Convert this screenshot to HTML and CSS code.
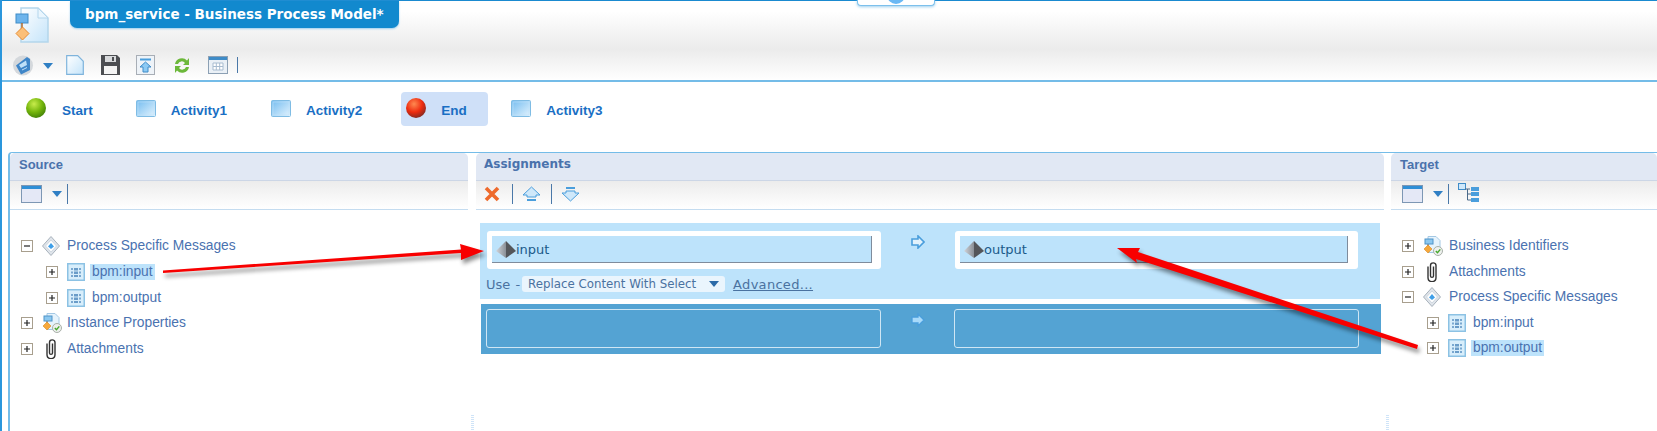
FILE: index.html
```html
<!DOCTYPE html>
<html lang="en">
<head>
    <meta charset="UTF-8">
    <meta name="viewport" content="width=device-width, initial-scale=1.0">
    <title>bpm_service - Business Process Model</title>
    <link rel="stylesheet" href="styles.css">
</head>
<body>
    <svg class="defs" width="0" height="0">
        <defs>
            <radialGradient id="gGreen" cx="40%" cy="30%" r="75%"><stop offset="0" stop-color="#c8ec4c"/><stop offset=".55" stop-color="#74b50c"/><stop offset="1" stop-color="#3f7d08"/></radialGradient>
            <radialGradient id="gRed" cx="40%" cy="30%" r="75%"><stop offset="0" stop-color="#ff8a50"/><stop offset=".55" stop-color="#ee2c10"/><stop offset="1" stop-color="#7a2a24"/></radialGradient>
            <linearGradient id="gActivity" x1="0" y1="0" x2="1" y2="1"><stop offset="0" stop-color="#74bcf0"/><stop offset="1" stop-color="#e4f4fe"/></linearGradient>
            <linearGradient id="gPage" x1="0" y1="0" x2="1" y2="1"><stop offset="0" stop-color="#fff"/><stop offset="1" stop-color="#c4e4fa"/></linearGradient>
            <linearGradient id="gLeft" x1="0" y1="0" x2="1" y2="0"><stop offset="0" stop-color="#d0d4da"/><stop offset="1" stop-color="#8a8f96"/></linearGradient>
            <symbol id="i-ball-green" viewBox="0 0 20 20"><circle cx="10" cy="10" r="10" fill="url(#gGreen)"/></symbol>
            <symbol id="i-ball-red" viewBox="0 0 20 20"><circle cx="10" cy="10" r="10" fill="url(#gRed)"/></symbol>
            <symbol id="i-activity" viewBox="0 0 20 17"><rect x=".5" y=".5" width="19" height="16" rx="1" fill="url(#gActivity)" stroke="#7fbce4"/><rect x="2" y="2" width="16" height="13" fill="none" stroke="#bfe2f8" stroke-width=".6"/></symbol>
            <symbol id="i-window" viewBox="0 0 21 18"><rect x=".5" y=".5" width="20" height="17" fill="#e4e8f6" stroke="#7d97b4"/><rect x="1" y="1" width="19" height="3" fill="#2f8fd6"/></symbol>
            <symbol id="i-drop" viewBox="0 0 10 6"><path d="M0 0h10L5 6z" fill="#2f7fc4"/></symbol>
            <symbol id="i-plus" viewBox="0 0 12 12"><rect x=".5" y=".5" width="11" height="11" fill="#fff" stroke="#a89f8e"/><path d="M3 6h6M6 3v6" stroke="#222" stroke-width="1.2"/></symbol>
            <symbol id="i-minus" viewBox="0 0 12 12"><rect x=".5" y=".5" width="11" height="11" fill="#fff" stroke="#a89f8e"/><path d="M3 6h6" stroke="#222" stroke-width="1.2"/></symbol>
            <symbol id="i-diamond" viewBox="0 0 18 20"><path d="M9 .5 17.5 10 9 19.500.5 10z" fill="#dfe4ea" stroke="#a8b2bc"/><path d="M9 4 14.500 10 9 16 3.500 10z" fill="#fff" stroke="#cfd8e0"/><path d="M9 7 12 10.500 9 13 6 10.500z" fill="#3f9fe8"/></symbol>
            <symbol id="i-message" viewBox="0 0 18 18"><rect x=".75" y=".75" width="16.500" height="16.500" fill="#d8eefb" stroke="#8cc2e4" stroke-width="1.500"/><path d="M4 5h2v2H4zM4 8.500h2v2H4zM4 12h2v2H4zM12 5h2v2h-2zM12 8.500h2v2h-2zM12 12h2v2h-2z" fill="#7aa8d0"/><path d="M7 5h4v2.500H7zM7 8.500h4V11H7zM7 12h4v2H7z" fill="#6a9cc8"/></symbol>
            <symbol id="i-props" viewBox="0 0 20 20"><path d="M5 .5h8l4 4v12H5z" fill="#e6f3fc" stroke="#a4c8e4"/><rect x="2" y="3" width="8" height="5" fill="#8cc8f0" stroke="#4f94c8"/><path d="M5 8v3" stroke="#777"/><path d="M5 9 9 13 5 17 1 13z" fill="#f6a83c" stroke="#d88a20" stroke-width=".6"/><circle cx="15" cy="15" r="4.500" fill="#eef0ee" stroke="#a8b0a8"/><path d="M12.800 15l1.700 1.800 2.800-3.400" fill="none" stroke="#46a82c" stroke-width="1.400"/></symbol>
            <symbol id="i-clip" viewBox="0 0 12 20"><path d="M2 4.500v11c0 5.500 8 5.500 8 0V3.500C10 0 4.500 0 4.500 3.500V14c0 1.800 3 1.800 3 0V4.500" fill="none" stroke="#333" stroke-width="1.400"/></symbol>
            <symbol id="i-pyramid" viewBox="0 0 20 17"><path d="M10 0 0 10l10 7z" fill="url(#gLeft)"/><path d="M10 0l10 10-10 7z" fill="#54565a"/></symbol>
            <symbol id="i-next" viewBox="0 0 14 14"><path d="M1 4h6V1l6 6-6 6v-3H1z" fill="#e2f2fc" stroke="#4a9edc" stroke-width="1.600"/></symbol>
            <symbol id="i-next-dark" viewBox="0 0 14 14"><path d="M1 4h6V1l6 6-6 6v-3H1z" fill="#a8dafa" stroke="#4a9edc" stroke-width="1.300"/></symbol>
        </defs>
    </svg>

    <div class="app">
        <div class="header">
            <div class="title-row">
                <svg class="model-icon" width="36" height="37" viewBox="0 0 36 37">
                    <path d="M6 1h17l10 10v24H6z" fill="url(#gPage)" stroke="#b4d6ec" stroke-width="1.500"/>
                    <path d="M23 1v10h10z" fill="#eaf6fe" stroke="#b4d6ec"/>
                    <rect x="1" y="7" width="12" height="9" fill="#6cb4ec" stroke="#3f8cc8"/>
                    <path d="M7 16v6" stroke="#b06a2c" stroke-width="1.500"/>
                    <path d="M7.500 20 14 26.500 7.500 33 1 26.500z" fill="#fbbf78" stroke="#e88c30"/>
                </svg>
                <div class="title-tab">bpm_service - Business Process Model*</div>
            </div>
            <div class="tool-row">
                <svg class="ti-globe" width="20" height="21" viewBox="0 0 20 21">
                    <circle cx="10" cy="10.500" r="10" fill="#d4d8dc"/>
                    <path d="M3 10.500 14 2l3 2v11l-9 4.500z" fill="#3f86c8"/>
                    <path d="M6 10l7-4.500 1 4.500-6 3z" fill="#bfe0f8"/>
                    <path d="M9 15l5-2.500" stroke="#bfe0f8"/>
                </svg>
                <svg class="ti-drop" width="10" height="6"><use href="#i-drop"/></svg>
                <svg class="ti-new" width="18" height="20" viewBox="0 0 18 20">
                    <path d="M.7.700h11l5.600 5.600v13H.7z" fill="url(#gPage)" stroke="#7fb4dc" stroke-width="1.200"/>
                </svg>
                <svg class="ti-save" width="19" height="20" viewBox="0 0 19 20">
                    <path d="M0 0h16l3 3v17H0z" fill="#4c4e52"/>
                    <rect x="4" y="1" width="11" height="6" fill="#d8dadc"/>
                    <rect x="11" y="2" width="2" height="4" fill="#4c4e52"/>
                    <rect x="3" y="11" width="13" height="8" fill="#f4f4f4"/>
                </svg>
                <svg class="ti-up" width="19" height="20" viewBox="0 0 19 20">
                    <rect x=".5" y=".5" width="18" height="19" fill="#eef3f8" stroke="#a8aeb6"/>
                    <path d="M4 4.500h11" stroke="#4a9edc" stroke-width="2"/>
                    <path d="M9.500 7 15 12h-3v5H7v-5H4z" fill="#8ccaf4" stroke="#3f8cc8"/>
                </svg>
                <svg class="ti-refresh" width="18" height="19" viewBox="0 0 18 19">
                    <path d="M2 8a7 7 0 0 1 12-3.500L16 2v7h-6l2-2a4 4 0 0 0-7 1z" fill="#6cb83a"/>
                    <path d="M16 11a7 7 0 0 1-12 3.500L2 17v-7h6l-2 2a4 4 0 0 0 7-1z" fill="#6cb83a"/>
                </svg>
                <svg class="ti-cal" width="20" height="18" viewBox="0 0 20 18">
                    <rect x=".5" y=".5" width="19" height="17" fill="#eaf0f6" stroke="#8ca0b4"/>
                    <rect x="1" y="1" width="18" height="3" fill="#3f8cc8"/>
                    <path d="M5 7h10v7H5zM8.300 7v7M11.700 7v7M5 10.500h10" fill="#fff" stroke="#a8bcd0"/>
                </svg>
                <span class="tool-sep"></span>
            </div>
            <div class="top-tab"><span class="top-tab-dot"></span></div>
        </div>

        <div class="nav">
            <div class="nav-item nav-first"><svg width="20" height="20"><use href="#i-ball-green"/></svg><span>Start</span></div>
            <div class="nav-item"><svg width="20" height="17"><use href="#i-activity"/></svg><span>Activity1</span></div>
            <div class="nav-item"><svg width="20" height="17"><use href="#i-activity"/></svg><span>Activity2</span></div>
            <div class="nav-item nav-selected"><svg width="20" height="20"><use href="#i-ball-red"/></svg><span>End</span></div>
            <div class="nav-item nav-last"><svg width="20" height="17"><use href="#i-activity"/></svg><span>Activity3</span></div>
        </div>

        <div class="panels">
            <section class="panel">
                <h2 class="panel-head">Source</h2>
                <div class="panel-tools">
                    <svg class="pt-window" width="21" height="18"><use href="#i-window"/></svg>
                    <svg class="pt-drop" width="10" height="6"><use href="#i-drop"/></svg>
                    <span class="pt-sep"></span>
                </div>
                <div class="tree">
                    <div class="tree-row"><svg width="12" height="12"><use href="#i-minus"/></svg><svg class="tree-icon" width="18" height="20"><use href="#i-diamond"/></svg><span class="tree-label">Process Specific Messages</span></div>
                    <div class="tree-row tree-child"><svg width="12" height="12"><use href="#i-plus"/></svg><svg class="tree-icon" width="18" height="18"><use href="#i-message"/></svg><span class="tree-label tree-selected">bpm:input</span></div>
                    <div class="tree-row tree-child"><svg width="12" height="12"><use href="#i-plus"/></svg><svg class="tree-icon" width="18" height="18"><use href="#i-message"/></svg><span class="tree-label">bpm:output</span></div>
                    <div class="tree-row"><svg width="12" height="12"><use href="#i-plus"/></svg><svg class="tree-icon" width="20" height="20"><use href="#i-props"/></svg><span class="tree-label">Instance Properties</span></div>
                    <div class="tree-row"><svg width="12" height="12"><use href="#i-plus"/></svg><svg class="tree-icon tree-clip" width="12" height="20"><use href="#i-clip"/></svg><span class="tree-label">Attachments</span></div>
                </div>
            </section>

            <div class="splitter"><span></span></div>

            <section class="panel">
                <h2 class="panel-head panel-head-wide">Assignments</h2>
                <div class="panel-tools tools-assign">
                    <svg width="16" height="16" viewBox="0 0 16 16"><path d="M2 2l12 12M14 2 2 14" stroke="#ee6a2c" stroke-width="3.600"/></svg>
                    <span class="pt-sep"></span>
                    <svg width="19" height="16" viewBox="0 0 19 16"><path d="M9.500 1 18 9h-4v2H5V9H1z" fill="#cfe8fa" stroke="#4a9edc"/><path d="M5 14h9" stroke="#4a9edc" stroke-width="2"/></svg>
                    <span class="pt-sep"></span>
                    <svg width="19" height="16" viewBox="0 0 19 16"><path d="M9.500 15 18 7h-4V5H5v2H1z" fill="#cfe8fa" stroke="#4a9edc"/><path d="M5 2h9" stroke="#4a9edc" stroke-width="2"/></svg>
                </div>
                <div class="assign-list">
                    <div class="assign-row">
                        <div class="assign-grid">
                            <div class="copy-box"><div class="copy-field"><svg width="20" height="17"><use href="#i-pyramid"/></svg><span>input</span></div></div>
                            <svg class="assign-arrow" width="14" height="14"><use href="#i-next"/></svg>
                            <div class="copy-box copy-box-to"><div class="copy-field"><svg width="20" height="17"><use href="#i-pyramid"/></svg><span>output</span></div></div>
                        </div>
                        <div class="use-row">
                            <span class="use-label">Use -</span>
                            <span class="use-select">Replace Content With Select<svg width="12" height="6" viewBox="0 0 10 6"><path d="M0 0h10L5 6z" fill="#2a6aa8"/></svg></span>
                            <a class="use-link" href="#">Advanced...</a>
                        </div>
                    </div>
                    <div class="assign-row assign-empty">
                        <div class="assign-grid assign-grid-empty">
                            <div class="empty-box"></div>
                            <svg class="assign-arrow" width="14" height="14"><use href="#i-next-dark"/></svg>
                            <div class="empty-box"></div>
                        </div>
                    </div>
                </div>
            </section>

            <div class="splitter"><span></span></div>

            <section class="panel">
                <h2 class="panel-head">Target</h2>
                <div class="panel-tools">
                    <svg class="pt-window" width="21" height="18"><use href="#i-window"/></svg>
                    <svg class="pt-drop" width="10" height="6"><use href="#i-drop"/></svg>
                    <span class="pt-sep"></span>
                    <svg class="pt-tree" width="21" height="20" viewBox="0 0 21 20">
                        <rect x=".5" y=".5" width="7" height="6" fill="#cfe8fa" stroke="#3f8cc8"/>
                        <path d="M7 6h5M9.500 6v11M9.500 11H13M9.500 17H13" stroke="#4a6a8a" fill="none"/>
                        <path d="M13 4h8v4h-8zM13 9h8v4h-8zM13 15h8v4h-8z" fill="#4a9edc"/>
                    </svg>
                </div>
                <div class="tree tree-target">
                    <div class="tree-row"><svg width="12" height="12"><use href="#i-plus"/></svg><svg class="tree-icon" width="20" height="20"><use href="#i-props"/></svg><span class="tree-label">Business Identifiers</span></div>
                    <div class="tree-row"><svg width="12" height="12"><use href="#i-plus"/></svg><svg class="tree-icon tree-clip" width="12" height="20"><use href="#i-clip"/></svg><span class="tree-label">Attachments</span></div>
                    <div class="tree-row"><svg width="12" height="12"><use href="#i-minus"/></svg><svg class="tree-icon" width="18" height="20"><use href="#i-diamond"/></svg><span class="tree-label">Process Specific Messages</span></div>
                    <div class="tree-row tree-child"><svg width="12" height="12"><use href="#i-plus"/></svg><svg class="tree-icon" width="18" height="18"><use href="#i-message"/></svg><span class="tree-label">bpm:input</span></div>
                    <div class="tree-row tree-child"><svg width="12" height="12"><use href="#i-plus"/></svg><svg class="tree-icon" width="18" height="18"><use href="#i-message"/></svg><span class="tree-label tree-selected">bpm:output</span></div>
                </div>
            </section>
        </div>
    </div>

    <svg class="callouts" width="1657" height="431" viewBox="0 0 1657 431">
        <polygon points="163,270.500 461,249.500 460,244 484,251 461,260 461,253 163,273" fill="#f80000"/>
        <polygon points="1117,248 1140,248 1138,252 1418,345 1417,349 1136,259 1137,263" fill="#f80000"/>
    </svg>
</body>
</html>
```

FILE: styles.css
```css
* {
    box-sizing: border-box;
}
html, body {
    margin: 0;
    height: 431px;
    overflow: hidden;
    background: #fff;
}
body {
    font-family: "Liberation Sans", Arial, sans-serif;
    position: relative;
}
svg {
    display: block;
    flex: none;
}
.defs {
    position: absolute;
}
.app {
    height: 431px;
    border-left: 2px solid #2a96dc;
    display: flex;
    flex-direction: column;
}

/* header */
.header {
    position: relative;
    height: 82px;
    border-top: 1px solid #1a8ad0;
    border-bottom: 2px solid #74bce8;
    background: linear-gradient(#fff 0, #fff 10px, #ebebeb 48px, #fff 79px);
}
.title-row {
    display: flex;
    height: 50px;
}
.model-icon {
    margin: 6px 0 0 13px;
}
.title-tab {
    margin-left: 19px;
    width: 329px;
    height: 27px;
    padding-left: 15px;
    background: #1289ce;
    color: #fff;
    font: bold 13.5px/26px "DejaVu Sans", sans-serif;
    border-radius: 0 0 7px 7px;
    box-shadow: 0 1px 2px #9ccfee;
}
.tool-row {
    display: flex;
    align-items: center;
    height: 28px;
}
.ti-globe { margin-left: 11px; }
.ti-drop { margin-left: 10px; margin-top: 2px; }
.ti-new { margin-left: 13px; }
.ti-save { margin-left: 17px; }
.ti-up { margin-left: 16px; }
.ti-refresh { margin-left: 18px; }
.ti-cal { margin-left: 17px; }
.tool-sep {
    width: 1px;
    height: 16px;
    margin-left: 9px;
    background: #4a78a8;
}
.top-tab {
    position: absolute;
    left: 855px;
    top: -1px;
    width: 78px;
    height: 6px;
    background: #fff;
    border: 1px solid #7cc0ec;
    border-top: 0;
    border-radius: 0 0 4px 4px;
    box-shadow: 0 1px 3px #9ccfee;
    overflow: hidden;
}
.top-tab-dot {
    display: block;
    width: 18px;
    height: 18px;
    margin: -14px 0 0 29px;
    border-radius: 50%;
    background: #6ab8f4;
}

/* process steps */
.nav {
    display: flex;
    align-items: flex-start;
    height: 70px;
    padding-top: 10px;
    flex: none;
}
.nav-item {
    display: flex;
    align-items: center;
    height: 34px;
    color: #1a6fc4;
    font-size: 13.5px;
    font-weight: bold;
}
.nav-item svg {
    margin-top: -2px;
}
.nav-item span {
    margin: 2px 0 0 15px;
}
.nav-first { margin-left: 24px; }
.nav-first span { margin-left: 16px; }
.nav-item:nth-child(2) { margin-left: 43px; }
.nav-item:nth-child(3) { margin-left: 44px; }
.nav-selected {
    margin-left: 39px;
    width: 87px;
    padding-left: 5px;
    background: #cfe0f8;
    border-radius: 4px;
}
.nav-last { margin-left: 23px; }

/* panels */
.panels {
    flex: 1;
    margin-left: 6px;
    display: grid;
    grid-template-columns: 458px 8px 908px 7px 1fr;
    border-top: 1px solid #74bce8;
    border-left: 2px solid #74bce8;
    border-top-left-radius: 4px;
    min-height: 0;
}
.panel {
    min-width: 0;
}
.panel-head {
    margin: 0;
    height: 28px;
    padding-left: 9px;
    line-height: 23px;
    font-size: 13px;
    font-weight: bold;
    color: #4a72ac;
    background: #e1e8f4;
    border-bottom: 1px solid #ccd6e6;
    border-radius: 5px 5px 0 0;
}
.panel-head-wide {
    padding-left: 8px;
    font-family: "DejaVu Sans", sans-serif;
    font-size: 12px;
}
.panel-tools {
    display: flex;
    align-items: center;
    height: 29px;
    padding: 0 0 3px 11px;
    background: linear-gradient(#ececec, #fff);
    border-bottom: 1px solid #c4dcf0;
}
.pt-drop { margin: 1px 0 0 10px; }
.pt-sep {
    width: 1px;
    height: 20px;
    margin: 0 0 0 5px;
    background: #4a78a8;
}
.pt-tree { margin-left: 9px; margin-top: -1px; }
.tools-assign {
    padding-left: 8px;
}
.tools-assign .pt-sep { margin: 0 9px 0 12px; }
.tools-assign .pt-sep:nth-child(4) { margin: 0 9px 0 10px; }

/* trees */
.tree {
    padding: 23.5px 0 0 11px;
}
.tree-row {
    position: relative;
    display: flex;
    align-items: center;
    height: 25.7px;
}
.tree-target .tree-row {
    height: 25.5px;
}
.tree-child {
    padding-left: 25px;
}
.tree-icon {
    margin-left: 9px;
}
.tree-clip {
    margin-left: 12px;
}
.tree-label {
    position: absolute;
    left: 44px;
    padding: 0 2px;
    line-height: 16px;
    font-size: 13.8px;
    color: #4a72b0;
    white-space: nowrap;
}
.tree-target .tree-label {
    left: 45px;
}
.tree-child .tree-label,
.tree-target .tree-child .tree-label {
    left: 69px;
}
.tree-selected {
    background: #bde3fb;
}

/* assignments */
.assign-list {
    padding: 13px 0 0 4px;
}
.assign-row {
    width: 900px;
    height: 76px;
    padding: 8px 0 0 7px;
    background: #bde3fb;
    font: 12px "DejaVu Sans", sans-serif;
    color: #4a72a0;
}
.assign-grid {
    display: grid;
    grid-template-columns: 394px 74px 403px;
}
.copy-box {
    height: 38px;
    padding: 5px 9px 6px 5px;
    background: #fff;
    border-radius: 3px;
}
.copy-box-to {
    padding-right: 10px;
}
.copy-field {
    display: flex;
    align-items: center;
    height: 27px;
    padding-left: 4px;
    background: #bde3fb;
    border-right: 1px solid #7f8c9c;
    border-bottom: 1px solid #7f8c9c;
    font-size: 13px;
    color: #1a5a8a;
}
.assign-arrow {
    justify-self: center;
    margin-top: 4px;
}
.use-row {
    display: flex;
    align-items: center;
    height: 16px;
    margin: 7px 0 0 -1px;
}
.use-label {
    font-size: 13px;
    word-spacing: 1px;
}
.use-select {
    display: flex;
    align-items: center;
    justify-content: space-between;
    width: 203px;
    height: 16px;
    margin-left: 2px;
    padding: 0 5px 0 6px;
    font-size: 11.8px;
    background: #eaf5fd;
    border-radius: 3px;
}
.use-link {
    margin-left: 8px;
    font-size: 13px;
    letter-spacing: 0.3px;
    color: #4a72a0;
}
.assign-empty {
    height: 50px;
    margin: 5px 0 0 1px;
    padding: 5px 0 0 5px;
    background: #54a3d3;
}
.assign-grid-empty {
    grid-template-columns: 395px 73px 405px;
}
.empty-box {
    height: 39px;
    border: 1px solid #cfe6f4;
    border-radius: 3px;
}

/* splitter grip */
.splitter {
    display: flex;
    align-items: flex-end;
    justify-content: center;
}
.splitter span {
    width: 3px;
    height: 16px;
    background: repeating-linear-gradient(#cfe4f8 0, #cfe4f8 1px, #fff 1px, #fff 2px);
}

/* red hand-drawn arrows over the screenshot */
.callouts {
    position: absolute;
    left: 0;
    top: 0;
    filter: drop-shadow(2px 4px 2px rgba(0, 0, 0, 0.45));
}
```
